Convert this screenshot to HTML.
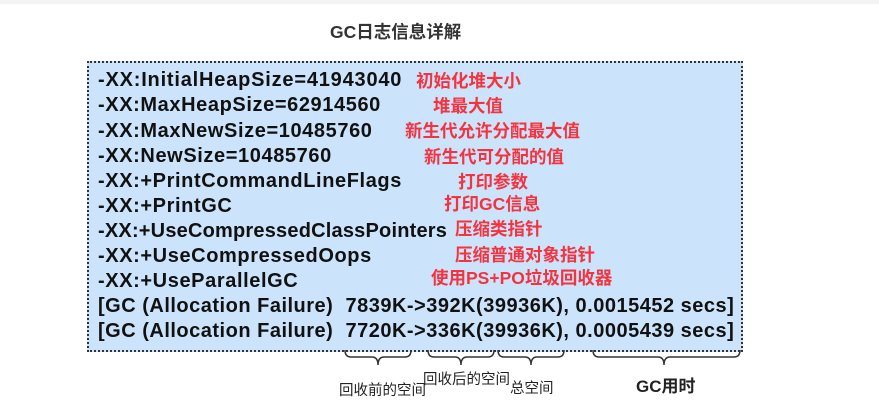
<!DOCTYPE html><html><head><meta charset="utf-8"><style>
body{margin:0;width:879px;height:413px;background:#fff;position:relative;overflow:hidden;font-family:"Liberation Sans","Noto Sans CJK SC",sans-serif}
.top{position:absolute;left:0;top:0;width:879px;height:4px;background:#f3f3f3}
.title{position:absolute;left:330px;top:19px;font-size:17.5px;font-weight:bold;color:#333}
.box{position:absolute;left:87px;top:61px;width:652px;height:287px;background:#cce4fb;border:2px dotted #333}
.l{position:absolute;left:98px;font-size:20px;font-weight:bold;color:#111;white-space:nowrap;line-height:22px;letter-spacing:0.6px}
.r{position:absolute;font-size:17.5px;font-weight:bold;color:#f5333f;white-space:nowrap;line-height:20px}
.lab{position:absolute;font-size:14.5px;color:#222;white-space:nowrap}
svg{position:absolute;left:0;top:0}
</style></head><body>
<div class="top"></div>
<div class="title">GC日志信息详解</div>
<div class="box"></div>
<div class="l" style="top:69px;letter-spacing:0.8px">-XX:InitialHeapSize=41943040</div>
<div class="l" style="top:94px">-XX:MaxHeapSize=62914560</div>
<div class="l" style="top:120px">-XX:MaxNewSize=10485760</div>
<div class="l" style="top:145px">-XX:NewSize=10485760</div>
<div class="l" style="top:170px">-XX:+PrintCommandLineFlags</div>
<div class="l" style="top:195px">-XX:+PrintGC</div>
<div class="l" style="top:220px;letter-spacing:0.2px">-XX:+UseCompressedClassPointers</div>
<div class="l" style="top:245px">-XX:+UseCompressedOops</div>
<div class="l" style="top:270px">-XX:+UseParallelGC</div>
<div class="l" style="top:295px;letter-spacing:0.5px">[GC (Allocation Failure)&nbsp; 7839K-&gt;392K(39936K), 0.0015452 secs]</div>
<div class="l" style="top:320px;letter-spacing:0.5px">[GC (Allocation Failure)&nbsp; 7720K-&gt;336K(39936K), 0.0005439 secs]</div>
<div class="r" style="left:416px;top:71px">初始化堆大小</div>
<div class="r" style="left:433px;top:96px">堆最大值</div>
<div class="r" style="left:405px;top:121px">新生代允许分配最大值</div>
<div class="r" style="left:424px;top:147px">新生代可分配的值</div>
<div class="r" style="left:458px;top:172px">打印参数</div>
<div class="r" style="left:444px;top:194px">打印GC信息</div>
<div class="r" style="left:455px;top:219px">压缩类指针</div>
<div class="r" style="left:455px;top:245px">压缩普通对象指针</div>
<div class="r" style="left:431px;top:268px">使用PS+PO垃圾回收器</div>
<svg width="879" height="413" fill="none" stroke="#333" stroke-width="1.5">
<path d="M345 350 q0 7 6 7 h21 q6 0 6 8 q0 -8 6 -8 h21 q6 0 6 -7"/>
<path d="M428 350 q0 7 6 7 h21 q6 0 6 8 q0 -8 6 -8 h21 q6 0 6 -7"/>
<path d="M498 350 q0 7 6 7 h21 q6 0 6 8 q0 -8 6 -8 h21 q6 0 6 -7"/>
<path d="M593 350 q0 7 6 7 h59 q6 0 6 8 q0 -8 6 -8 h64 q6 0 6 -7"/>
</svg>
<div class="lab" style="left:339px;top:379px">回收前的空间</div>
<div class="lab" style="left:423px;top:368px">回收后的空间</div>
<div class="lab" style="left:510px;top:377px">总空间</div>
<div class="lab" style="left:636px;top:372px;font-size:17px;font-weight:bold">GC用时</div>
</body></html>
